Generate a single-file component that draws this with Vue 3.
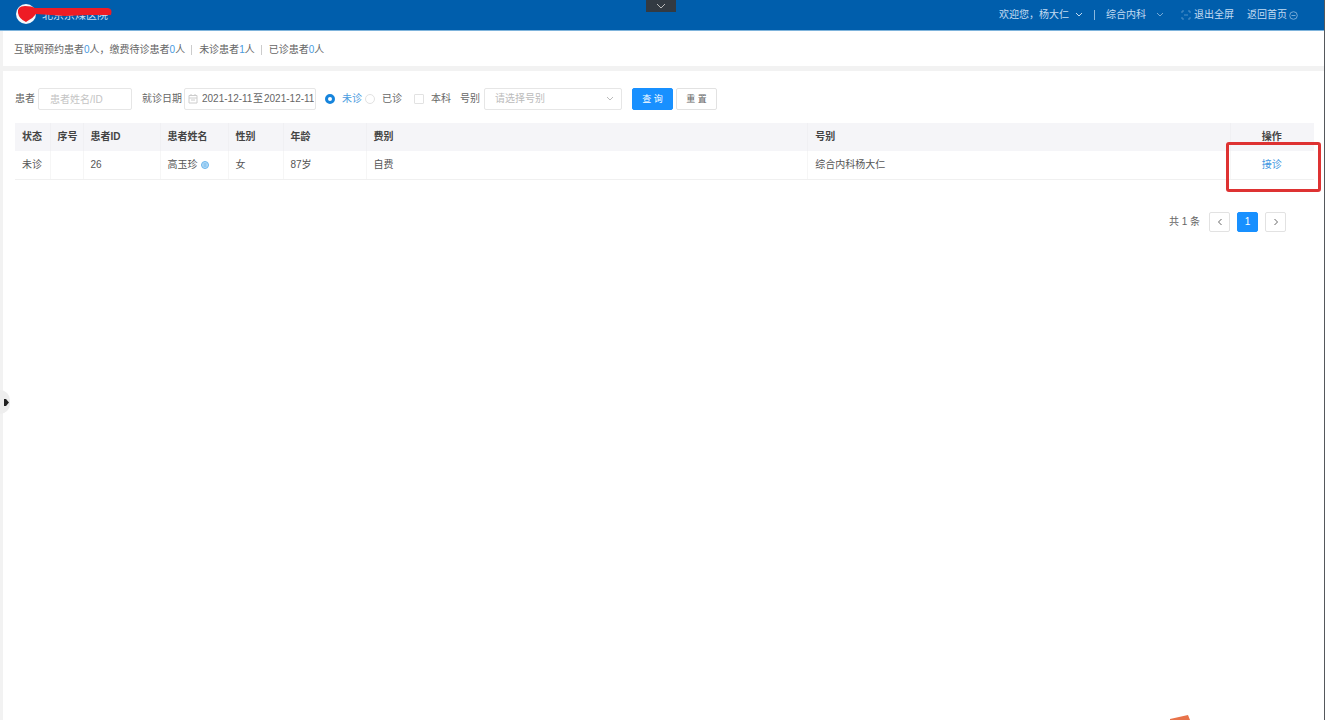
<script setup>
import { ref } from 'vue'

const name = ref('')
const category = ref('')
const status = ref('wait')
const own = ref(false)
const rows = [
  { state: '未诊', no: '', id: '26', name: '高玉珍', sex: '女', age: '87岁', fee: '自费', kind: '综合内科杨大仁' }
]
</script>

<template>
  <div class="page">
    <header class="top">
      <div class="brand">
        <svg class="logo" width="100" height="26" viewBox="0 0 100 26" aria-hidden="true">
          <circle cx="11" cy="14" r="10" fill="#f4f8fc" />
          <path d="M3 13Q2 6 10 6Q17 6 20 8H93Q98 9 96 15H74L50 16L21 14Q18 18 14 20L11 22Q4 19 3 13Z" fill="#ee1c25" />
        </svg>
        <h1>北京京煤医院</h1>
      </div>
      <button class="drop" aria-label="展开">
        <svg width="10" height="6" viewBox="0 0 10 6"><path d="M1 1l4 4 4-4" /></svg>
      </button>
      <nav class="user">
        <button class="menu welcome">欢迎您，杨大仁
          <svg width="8" height="6" viewBox="0 0 8 6"><path d="M1 1l3 3 3-3" /></svg>
        </button>
        <span class="bar"></span>
        <button class="menu dept">综合内科
          <svg width="8" height="6" viewBox="0 0 8 6"><path d="M1 1l3 3 3-3" /></svg>
        </button>
        <button class="menu full">
          <svg width="10" height="10" viewBox="0 0 10 10"><path d="M1 3V1h2M7 1h2v2M9 7v2H7M3 9H1V7M3 5h4" /></svg>退出全屏
        </button>
        <a class="menu" href="#">返回首页
          <svg width="9" height="9" viewBox="0 0 9 9"><circle cx="4.5" cy="4.5" r="3.8" /><path d="M2.500 4.500h4" /></svg>
        </a>
      </nav>
    </header>

    <main>
      <section class="summary">
        <span>互联网预约患者<b>0</b>人，缴费待诊患者<b>0</b>人</span>
        <span>未诊患者<b>1</b>人</span>
        <span>已诊患者<b>0</b>人</span>
      </section>

      <section class="panel">
        <form class="filters" @submit.prevent>
          <label for="patient">患者</label>
          <input id="patient" v-model="name" class="box patient" type="text" placeholder="患者姓名/ID">
          <label for="from">就诊日期</label>
          <div class="box range">
            <svg width="10" height="10" viewBox="0 0 10 10" aria-hidden="true"><path d="M1 1.500h8v7.500H1zM1 4h8M3 0v2M7 0v2M3 6h4" /></svg>
            <input id="from" type="text" value="2021-12-11">
            <span>至</span>
            <input type="text" value="2021-12-11" aria-label="结束日期">
          </div>
          <label class="pick first" :class="{ on: status === 'wait' }"><input v-model="status" type="radio" name="status" value="wait">未诊</label>
          <label class="pick" :class="{ on: status === 'done' }"><input v-model="status" type="radio" name="status" value="done">已诊</label>
          <label class="pick own"><input v-model="own" type="checkbox">本科</label>
          <label for="category">号别</label>
          <div class="choose">
            <select id="category" v-model="category" class="box">
              <option value="">请选择号别</option>
              <option value="gm">综合内科</option>
            </select>
            <svg width="8" height="6" viewBox="0 0 8 6" aria-hidden="true"><path d="M1 1l3 3 3-3" /></svg>
          </div>
          <button class="btn primary" type="submit">查 询</button>
          <button class="btn" type="reset">重 置</button>
        </form>

        <table>
          <colgroup>
            <col class="c-state"><col class="c-no"><col class="c-id"><col class="c-name"><col class="c-sex"><col class="c-age"><col class="c-fee"><col><col class="c-act">
          </colgroup>
          <thead>
            <tr><th>状态</th><th>序号</th><th>患者ID</th><th>患者姓名</th><th>性别</th><th>年龄</th><th>费别</th><th>号别</th><th class="act">操作</th></tr>
          </thead>
          <tbody>
            <tr v-for="r in rows" :key="r.id">
              <td>{{ r.state }}</td>
              <td>{{ r.no }}</td>
              <td>{{ r.id }}</td>
              <td>{{ r.name }}
                <svg class="badge" width="8" height="8" viewBox="0 0 8 8"><circle cx="4" cy="4" r="3.500" /><path d="M2.500 3h3M2.500 5h3" /></svg>
              </td>
              <td>{{ r.sex }}</td>
              <td>{{ r.age }}</td>
              <td>{{ r.fee }}</td>
              <td>{{ r.kind }}</td>
              <td class="act"><a href="#">接诊</a><span class="mark"></span></td>
            </tr>
          </tbody>
        </table>

        <nav class="pager" aria-label="分页">
          <span>共 1 条</span>
          <button aria-label="上一页"><svg width="6" height="8" viewBox="0 0 6 8"><path d="M4.500 1L1.500 4l3 3" /></svg></button>
          <button class="current">1</button>
          <button aria-label="下一页"><svg width="6" height="8" viewBox="0 0 6 8"><path d="M1.500 1l3 3-3 3" /></svg></button>
        </nav>
      </section>
    </main>

    <button class="expand" aria-label="展开侧栏">
      <svg width="5" height="7" viewBox="0 0 5 7"><path d="M0 0h2l3 3.500L2 7H0z" /></svg>
    </button>
    <svg class="corner" width="22" height="5" viewBox="0 0 22 5" aria-hidden="true"><path d="M0 4L18 0l2 5H0z" fill="#e8734a" /></svg>
  </div>
</template>

<style>
body { margin: 0; background: #f0f0f0; }
</style>

<style scoped>
.page {
  position: relative;
  box-sizing: border-box;
  display: flex;
  flex-direction: column;
  min-height: 100vh;
  overflow: hidden;
  border-right: 1px solid #55585c;
  background: #f2f2f2;
  color: #666;
  font: 10px/16px "Liberation Sans", "Noto Sans CJK SC", sans-serif;
}
button, input, select { font: inherit; color: inherit; }
button { padding: 0; border: 0; background: none; }
a { text-decoration: none; }
svg { flex-shrink: 0; fill: none; stroke: currentColor; stroke-width: 1; }

.top {
  position: relative;
  display: flex;
  align-items: center;
  justify-content: space-between;
  height: 30px;
  padding: 0 26px 0 15px;
  border-bottom: 1px solid #7fb4dc;
  background: #005eac;
  color: #c3dcf2;
}
.brand { position: relative; display: flex; height: 30px; }
.logo { position: absolute; top: 0; left: 0; stroke: none; }
.brand h1 { margin: 0 0 0 27px; font-size: 11px; font-weight: 400; line-height: 30px; }
.drop {
  position: absolute;
  top: 0;
  left: calc(50% - 16px);
  width: 30px;
  height: 12px;
  display: grid;
  place-items: center;
  background: #333a42;
  color: #bbb;
}
.user { display: flex; align-items: center; }
.menu { display: flex; align-items: center; color: inherit; white-space: nowrap; }
.welcome { gap: 6px; }
.bar { width: 1px; height: 10px; margin: 0 11px; background: #8ab8de; }
.dept { gap: 10px; margin-right: 17px; }
.dept svg { opacity: .6; }
.full { gap: 3px; margin-right: 13px; }
.full svg { opacity: .4; }
a.menu { gap: 2px; }
a.menu svg { opacity: .6; }

main { display: flex; flex: 1; flex-direction: column; gap: 5px; padding-left: 3px; }
.summary { display: flex; align-items: center; height: 32px; padding: 3px 0 0 11px; background: #fff; }
.summary span + span { margin-left: 6px; padding-left: 7px; border-left: 1px solid #ccc; line-height: 10px; }
.summary b { color: #4a9be0; font-weight: 400; }

.panel { flex: 1; padding: 17px 10px 0 12px; background: #fff; }
.filters { display: flex; align-items: center; height: 22px; }
.box {
  box-sizing: border-box;
  height: 22px;
  border: 1px solid #e6e6e6;
  border-radius: 2px;
  background: #fff;
}
.patient { width: 94px; margin: 0 10px 0 3px; padding: 0 11px; }
.patient::placeholder { color: #c4c4c4; }
.range { display: flex; align-items: center; width: 132px; margin-left: 2px; padding: 0 3px; }
.range svg { margin-right: 4px; color: #ccc; }
.range input { width: 50px; padding: 0; border: 0; outline: 0; }
.range span { margin: 0 1px; }
.pick { display: flex; align-items: center; gap: 7px; margin-left: 3px; }
.pick.first { margin-left: 9px; }
.pick.own { margin: 0 9px 0 12px; }
.pick input {
  appearance: none;
  box-sizing: border-box;
  width: 10px;
  height: 10px;
  margin: 0;
  border: 1px solid #e2e2e2;
  border-radius: 50%;
  background: #fff;
}
.pick input[type="checkbox"] { border-radius: 1px; }
.pick input:checked { border: 3px solid #1684dc; }
.pick.on { color: #4a9be0; }
.choose { position: relative; margin-left: 4px; }
.choose select { width: 138px; padding: 0 10px; appearance: none; color: #bbb; }
.choose svg { position: absolute; top: 8px; right: 8px; color: #bbb; }
.btn {
  box-sizing: border-box;
  width: 41px;
  height: 22px;
  margin-left: 3px;
  border: 1px solid #e2e2e2;
  border-radius: 2px;
  background: #fff;
  font-size: 9px;
}
.btn.primary { margin-left: 10px; border-color: #1890ff; background: #1890ff; color: #fff; }

table { width: 100%; margin-top: 13px; border-collapse: collapse; table-layout: fixed; color: #555; }
th, td { box-sizing: border-box; height: 28px; padding: 0 8px 0 7px; text-align: left; white-space: nowrap; }
th { border-right: 1px solid #f0f0f3; background: #f5f5f8; color: #444; font-weight: 700; }
td { border-right: 1px solid #f6f6f6; border-bottom: 1px solid #f0f0f0; }
.c-state { width: 35px; }
.c-no { width: 33px; }
.c-id { width: 77px; }
.c-name { width: 68px; }
.c-sex { width: 55px; }
.c-age { width: 83px; }
.c-fee { width: 34%; }
.c-act { width: 84px; }
.badge { margin-left: 1px; vertical-align: -1px; fill: #b6dcf8; color: #6ab4ea; }
.act { position: relative; text-align: center; border-right: 0; }
.act a { color: #3d95e0; }
.mark {
  position: absolute;
  top: -9px;
  left: -5px;
  right: -7px;
  height: 44px;
  border: 3px solid #de3232;
  border-radius: 3px;
}

.pager { display: flex; align-items: center; justify-content: flex-end; gap: 7px; margin-top: 32px; padding-right: 28px; }
.pager span { margin-right: 2px; }
.pager button {
  display: grid;
  place-items: center;
  box-sizing: border-box;
  width: 21px;
  height: 20px;
  border: 1px solid #e2e2e2;
  border-radius: 2px;
}
.pager .current { border-color: #1890ff; background: #1890ff; color: #fff; }

.expand {
  position: absolute;
  top: 390px;
  left: 0;
  display: grid;
  place-items: center start;
  width: 10px;
  height: 24px;
  padding-left: 4px;
  border-radius: 0 10px 10px 0;
  background: #eee;
  color: #222;
}
.expand svg { fill: currentColor; stroke: none; }
.corner { position: absolute; right: 132px; bottom: 0; stroke: none; }
</style>
